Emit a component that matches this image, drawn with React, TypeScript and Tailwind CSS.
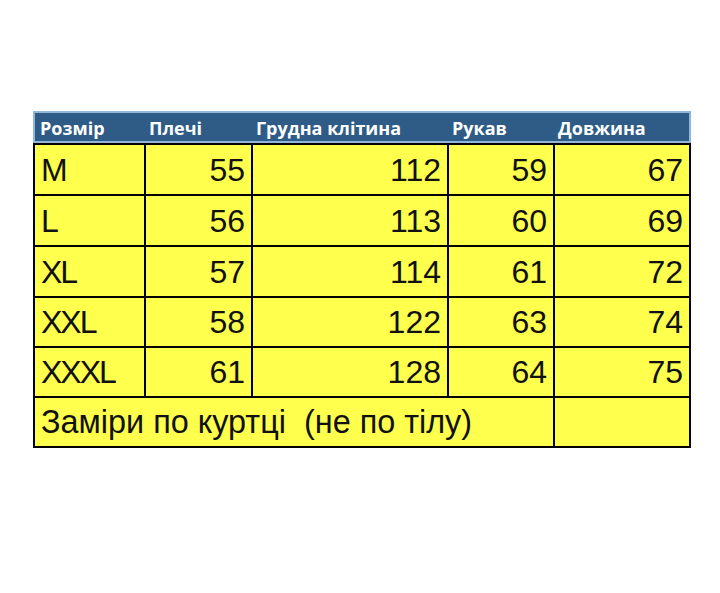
const headers = [
  { label: "Розмір", w: "w-[109px]" },
  { label: "Плечі", w: "w-[107px]" },
  { label: "Грудна клітина", w: "w-[196px]" },
  { label: "Рукав", w: "w-[106px]" },
  { label: "Довжина", w: "w-[136px]" },
];

const rows = [
  { size: "M", values: [55, 112, 59, 67], h: "h-[51px]" },
  { size: "L", values: [56, 113, 60, 69], h: "h-[51px]" },
  { size: "XL", values: [57, 114, 61, 72], h: "h-[51px]" },
  { size: "XXL", values: [58, 122, 63, 74], h: "h-[50px]" },
  { size: "XXXL", values: [61, 128, 64, 75], h: "h-[50px]" },
];

const cols = "grid grid-cols-[111px_107px_196px_106px_136px]";
const cell = "border-r-2 border-b-2 border-black flex items-center";

export default function App() {
  return (
    <div className="w-[720px] h-[593px] bg-white pt-[111px] pl-[33px] font-['Liberation_Sans',Arial,sans-serif] text-[#111]">
      {/* header bar */}
      <div className="w-[658px] h-[32px] border-2 border-[#90b6da] bg-[#2e5c87] flex items-center font-['Open_Sans',sans-serif] font-bold text-[18px] text-white">
        {headers.map((h) => (
          <div key={h.label} className={`${h.w} pl-[5px] pt-[3px] whitespace-nowrap`}>
            {h.label}
          </div>
        ))}
      </div>

      {/* body */}
      <div className={`${cols} w-[658px] border-l-2 border-t-2 border-black bg-[#ffff4d] text-[32px] leading-none`}>
        {rows.map((r) => (
          <div key={r.size} className="contents">
            <div className={`${cell} ${r.h} pl-[6px] tracking-[-2px]`}>{r.size}</div>
            {r.values.map((v, i) => (
              <div key={i} className={`${cell} ${r.h} justify-end pr-[6px]`}>
                {v}
              </div>
            ))}
          </div>
        ))}
        <div className={`${cell} h-[50px] col-span-4 pl-[6px] whitespace-pre text-[32.4px]`}>
          Заміри по куртці  (не по тілу)
        </div>
        <div className={`${cell} h-[50px]`} />
      </div>
    </div>
  );
}
